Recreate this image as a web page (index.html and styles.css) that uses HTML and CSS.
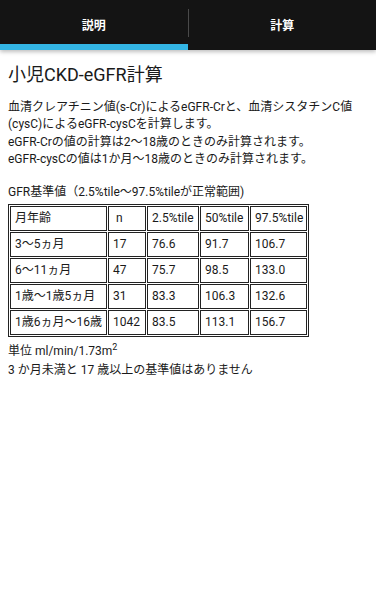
FILE: index.html
```html
<!DOCTYPE html>
<html lang="ja">
<head>
<meta charset="utf-8">
<link rel="stylesheet" href="styles.css">
</head>
<body>
<div class="tabs">
  <div class="tab active">説明</div>
  <div class="divider"></div>
  <div class="tab">計算</div>
</div>
<main class="content">
  <h1 class="title">小児CKD-eGFR計算</h1>
  <p class="first">血清クレアチニン値(s-Cr)によるeGFR-Crと、血清シスタチンC値(cysC)によるeGFR-cysCを計算します。</p>
  <p>eGFR-Crの値の計算は2～18歳のときのみ計算されます。</p>
  <p>eGFR-cysCの値は1か月～18歳のときのみ計算されます。</p>
  <p class="caption">GFR基準値（2.5%tile～97.5%tileが正常範囲)</p>
  <table class="ref">
    <colgroup>
      <col class="c1"><col class="c2"><col class="c3"><col class="c4"><col class="c5">
    </colgroup>
    <tr><td>月年齢</td><td class="n">n</td><td>2.5%tile</td><td>50%tile</td><td>97.5%tile</td></tr>
    <tr><td>3～5ヵ月</td><td>17</td><td>76.6</td><td>91.7</td><td>106.7</td></tr>
    <tr><td>6～11ヵ月</td><td>47</td><td>75.7</td><td>98.5</td><td>133.0</td></tr>
    <tr><td>1歳～1歳5ヵ月</td><td>31</td><td>83.3</td><td>106.3</td><td>132.6</td></tr>
    <tr><td>1歳6ヵ月～16歳</td><td>1042</td><td>83.5</td><td>113.1</td><td>156.7</td></tr>
  </table>
  <p class="unit">単位 ml/min/1.73m<sup>2</sup></p>
  <p class="note">3 か月未満と 17 歳以上の基準値はありません</p>
</main>
</body>
</html>
```
FILE: styles.css
```css
html, body {
  margin: 0;
  padding: 0;
  background: #fff;
}
body {
  font-family: "Roboto", "Noto Sans CJK JP", sans-serif;
  color: #1a1a1a;
  font-size: 12px;
}
.tabs {
  display: flex;
  align-items: center;
  height: 50px;
  background: #141414;
  box-shadow: 0 2px 4px rgba(0, 0, 0, 0.25);
  position: relative;
}
.tab {
  flex: 1;
  height: 50px;
  box-sizing: border-box;
  display: flex;
  align-items: center;
  justify-content: center;
  color: #fff;
  font-weight: bold;
  font-size: 12px;
  padding-bottom: 1px;
}
.tab.active {
  border-bottom: 6px solid #33b5e5;
  padding-top: 6px;
  padding-bottom: 1px;
}
.divider {
  width: 1px;
  height: 28px;
  background: #4a4a4a;
  margin-top: -4px;
}
.content {
  padding: 0 8px;
}
.title {
  margin: 13px 0 12px;
  font-size: 18px;
  font-weight: normal;
  line-height: 24px;
}
p {
  margin: 0;
  line-height: 17px;
}
p.first {
  margin-bottom: 1px;
}
p.caption {
  margin-top: 16px;
  margin-bottom: 3px;
}
.ref {
  table-layout: fixed;
  width: 300px;
  border: 1px solid #222;
  border-spacing: 1px;
  font-size: 12px;
}
.ref td {
  border: 1px solid #222;
  padding: 4px 4px;
  line-height: 15px;
  white-space: nowrap;
}
.ref td.n {
  padding-left: 7px;
}
.c1 { width: 97px; }
.c2 { width: 38px; }
.c3 { width: 52px; }
.c4 { width: 49px; }
.c5 { width: 57px; }
p.unit {
  margin-top: 5px;
  line-height: 19px;
}
p.unit sup {
  font-size: 9px;
  line-height: 0;
  vertical-align: 5px;
}
p.note {
  line-height: 19px;
}
```
